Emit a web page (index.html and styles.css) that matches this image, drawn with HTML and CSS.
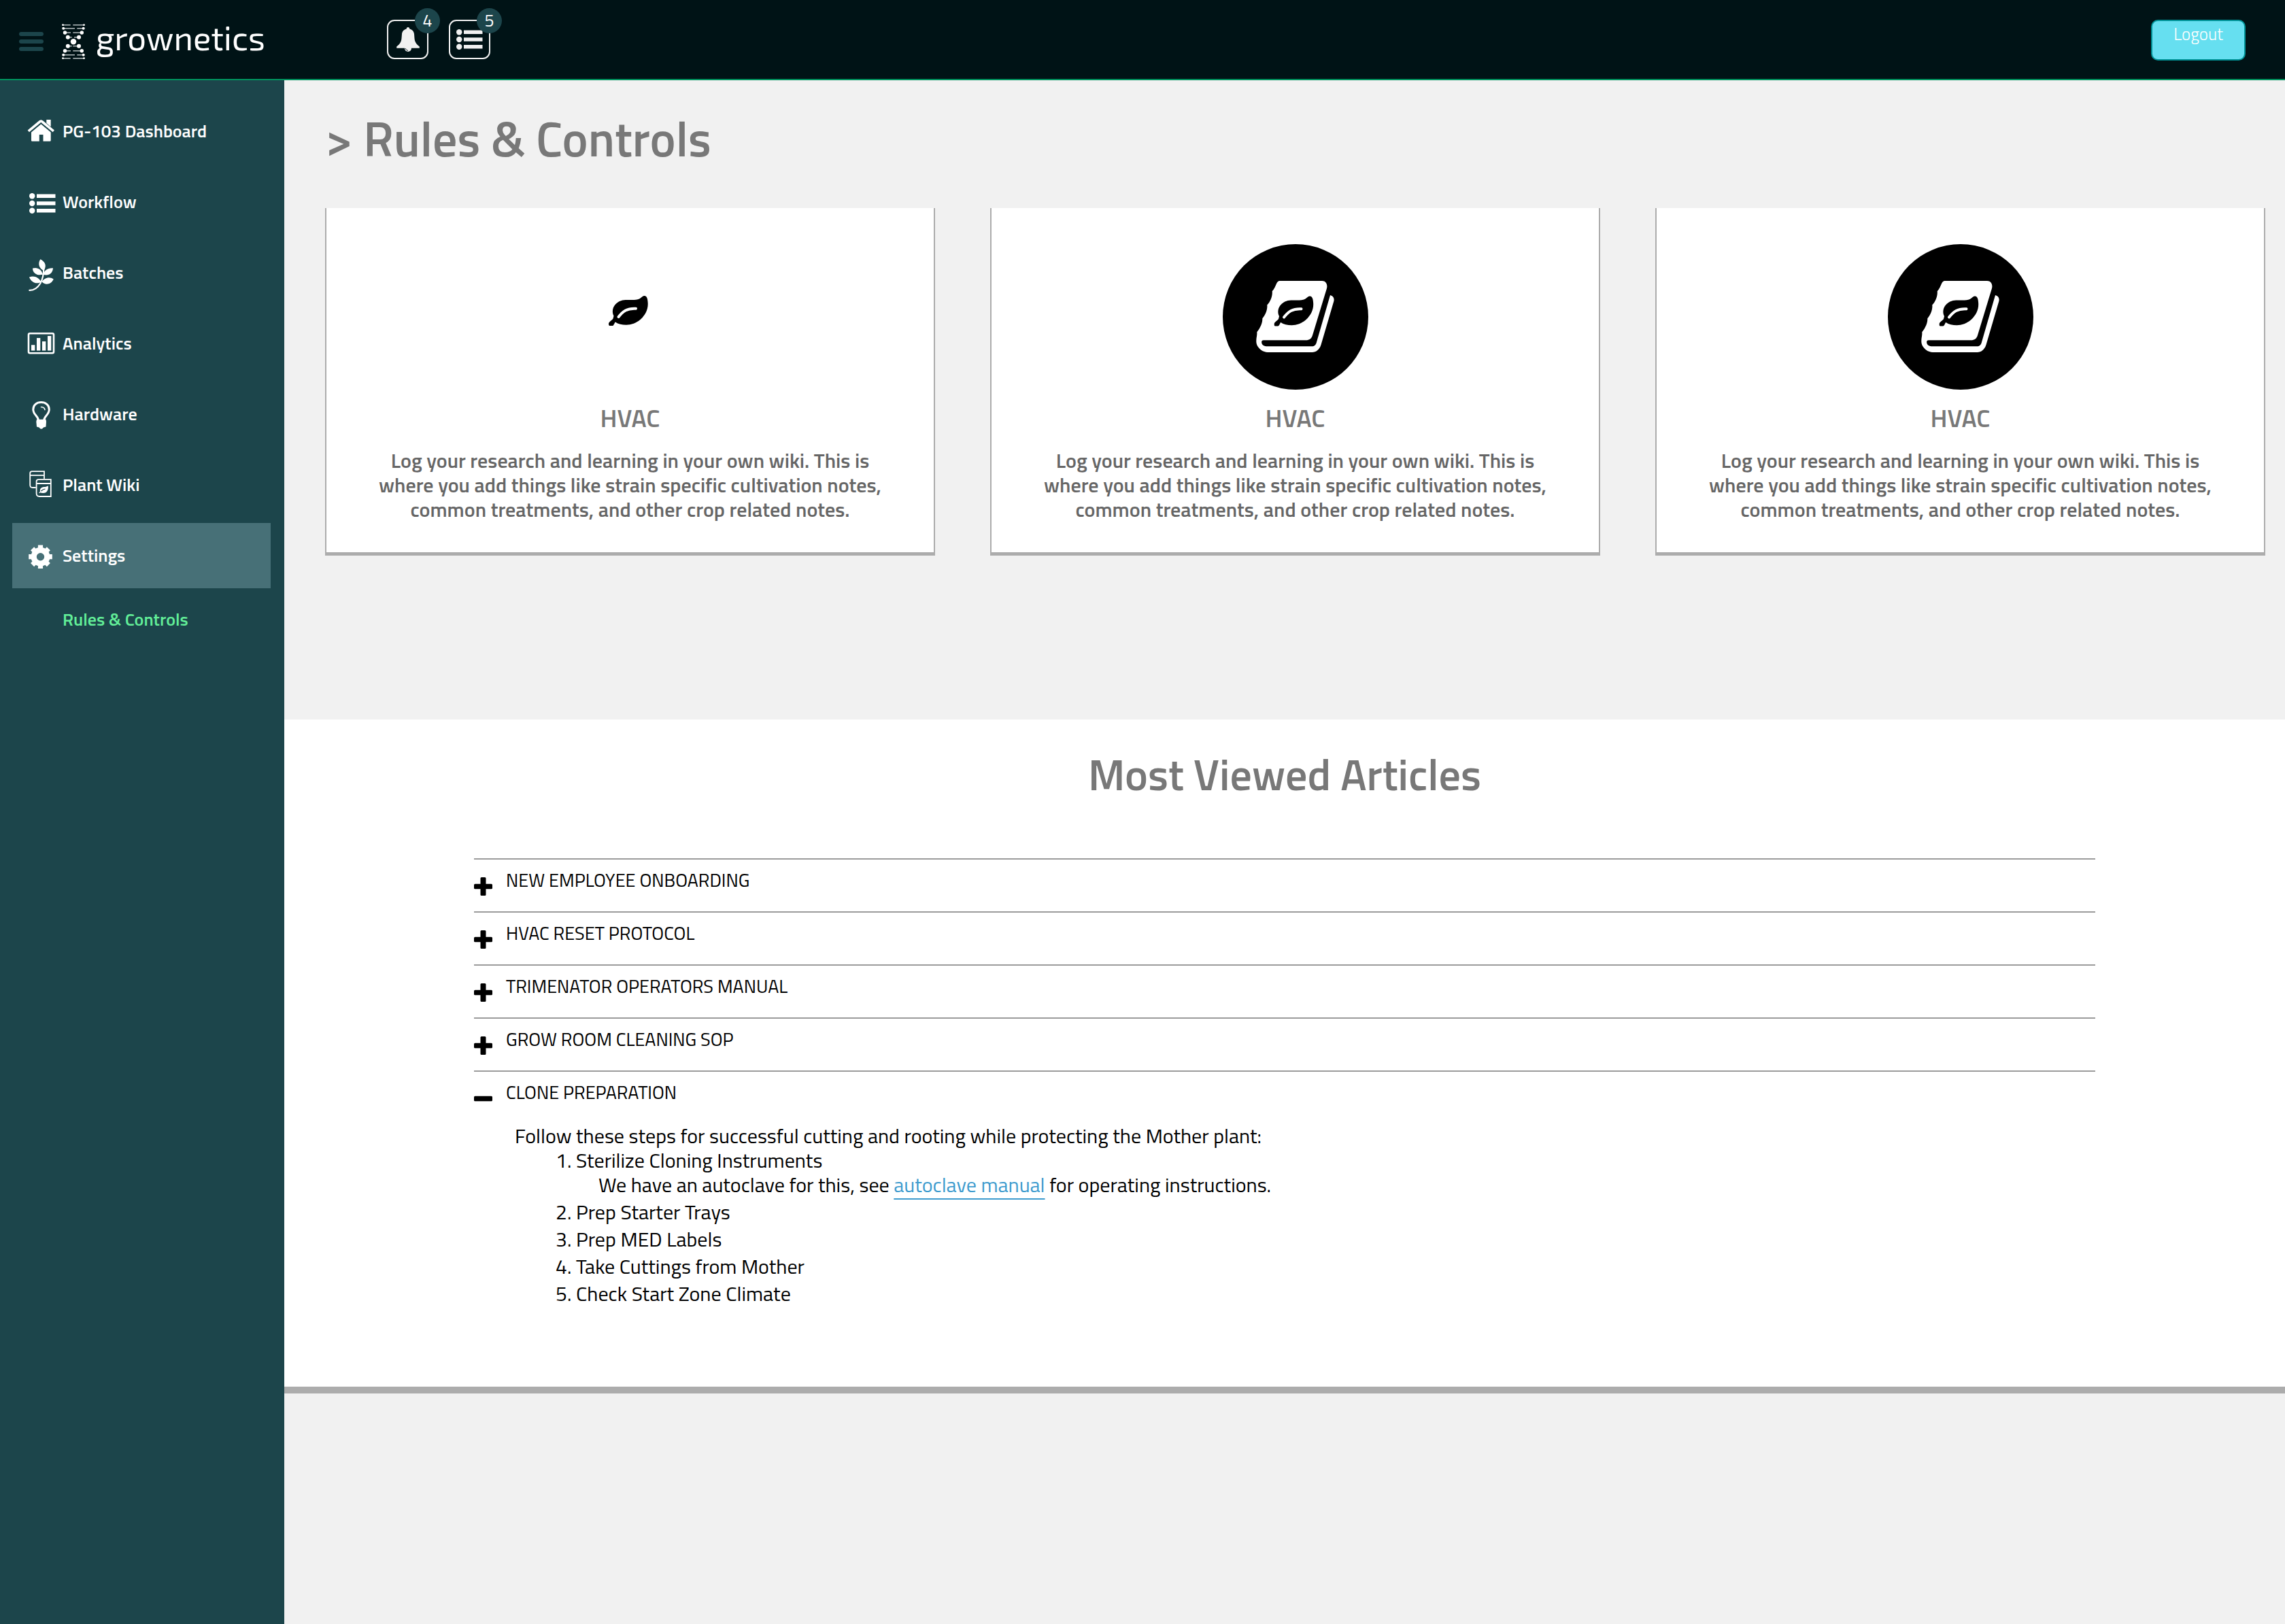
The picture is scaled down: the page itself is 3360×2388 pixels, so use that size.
FILE: index.html
```html
<!DOCTYPE html>
<html lang="en">
<head>
<meta charset="utf-8">
<meta name="viewport" content="width=device-width, initial-scale=1">
<title>Grownetics – Rules &amp; Controls</title>
<link rel="stylesheet" href="styles.css">
</head>
<body>
<svg class="sprite" aria-hidden="true">
  <symbol id="leaf" viewBox="0 0 60 50">
    <path fill="#000" d="M7.500 35.500C5 31 5 24 10 18.500C15 13 21 12 27 12C34 12 41 12.500 45 10.500C48 9 49 6.500 52 6C56 5.500 57.500 10 57.700 17C58 26 54 34 47 40.500C41 46 33 48.700 26 48.700C19.500 48.700 14 47.500 9.700 44.500C8.500 46 8 49 5.500 50.700C3 52.300-.5 50 0 46.800C.5 44 5.500 41.500 6.500 39.500Z"/>
    <path fill="none" stroke="#fff" stroke-width="4" stroke-linecap="round" d="M14.500 37C21 28.500 27 24 40 24.700"/>
  </symbol>
  <symbol id="list" viewBox="0 0 39 30">
    <circle cx="4.200" cy="4.200" r="4.200"/><circle cx="4.200" cy="15" r="4.200"/><circle cx="4.200" cy="25.800" r="4.200"/>
    <path d="M11 1.500h27.500V7H11zM11 12.300h27.500v5.500H11zM11 23h27.500v5.500H11z"/>
  </symbol>
  <symbol id="book" viewBox="0 0 214 214">
    <circle cx="107" cy="107" r="107"/>
    <path fill="#fff" d="M85 54H146C151.500 54 154.500 59 153 65L132 134C130.500 139 127.500 141.300 122 141.300H60C57.500 141.300 57 142.500 57.200 145C57.700 148.500 61 150.300 65.500 150.300H131C135 150.300 137 148 138 144L158 75C162 76 164.500 79.500 163.300 84L144.500 148C142.500 154.500 137.500 159 131.500 159H66C57 158.500 49 151 49.300 142.500C49.300 137 50.800 134 50.300 129.300C56 122 58.500 115 58.300 109.300C63 104 66 96 65.300 89.300C70 85 73.500 76 72.700 69.300C76 66 77.500 61 79.500 57C81 54.300 82.500 54 85 54Z"/>
    <use href="#leaf" x="75.500" y="70.500" width="60" height="50"/>
  </symbol>
  <symbol id="plus" viewBox="0 0 27 27"><rect x="9.500" width="8" height="27" rx="1.500"/><rect y="9.800" width="27" height="7.500" rx="1.500"/></symbol>
  <symbol id="minus" viewBox="0 0 27 27"><rect y="9.800" width="27" height="7.500" rx="1.500"/></symbol>
</svg>

<header class="topbar">
  <button class="menu-toggle" type="button" aria-label="Toggle menu"><span></span><span></span><span></span></button>
  <a class="brand" href="#">
    <svg class="brand-mark" viewBox="0 0 34 52" aria-hidden="true">
      <path stroke="#b4bcbd" stroke-width="1.600" fill="none" d="M1.300 1.700H12.700M16.300 1.700H32.700M2 6.700H19M22.300 6.700H31.700M4.300 13H13M16.300 13H29.300M8.700 19.700H14.700M18 19.700H25M8.700 32.700H14.700M16.300 32.700H25M4.300 39.700H13M16.300 39.700H29.300M2 45.700H19M22.300 45.700H31.700M1.300 50.700H12.700M16.300 50.700H32.700"/>
      <g fill="#fff">
        <circle cx="1.500" cy="1.700" r="1.400"/><circle cx="32.500" cy="1.700" r="1.400"/>
        <circle cx="2.200" cy="6.700" r="2"/><circle cx="31.700" cy="6.700" r="2"/>
        <circle cx="4.500" cy="13" r="2.700"/><circle cx="29.300" cy="13" r="2.700"/>
        <circle cx="8.800" cy="19.700" r="3"/><circle cx="25" cy="19.700" r="3"/>
        <circle cx="17" cy="26.300" r="4.200"/>
        <circle cx="8.800" cy="32.700" r="3"/><circle cx="25" cy="32.700" r="3"/>
        <circle cx="4.500" cy="39.700" r="2.700"/><circle cx="29.300" cy="39.700" r="2.700"/>
        <circle cx="2.200" cy="45.700" r="2"/><circle cx="31.700" cy="45.700" r="2"/>
        <circle cx="1.500" cy="50.700" r="1.400"/><circle cx="32.500" cy="50.700" r="1.400"/>
      </g>
    </svg>
    <span class="brand-name">grownetics</span>
  </a>
  <div class="alerts">
    <button class="alert" type="button" aria-label="Notifications">
      <svg class="bell" viewBox="0 0 34 36" aria-hidden="true">
        <path d="M17 0C18.500 0 19.300 1 19.300 2.500C23 3.300 25.500 6 26 10C26.500 15 26.300 18 27.500 21C29 25 31.500 26.500 33.800 28.500V30.700H.2V28.500C2.500 26.500 5 25 6.500 21C7.700 18 7.500 15 8 10C8.500 6 11 3.300 14.700 2.500C14.700 1 15.500 0 17 0Z"/>
        <circle cx="17" cy="31" r="5"/>
        <path class="bell-line" d="M13 31C14 33 15 34 17 34.300"/>
      </svg>
      <span class="count">4</span>
    </button>
    <button class="alert" type="button" aria-label="Tasks">
      <svg class="tasks" aria-hidden="true"><use href="#list"/></svg>
      <span class="count">5</span>
    </button>
  </div>
  <button class="logout" type="button">Logout</button>
</header>

<div class="layout">
  <nav class="sidebar" aria-label="Main">
    <a class="nav-item" href="#">
      <svg class="nav-icon" viewBox="0 0 40 48" aria-hidden="true"><path d="M20.300 13.500L34.700 25.500V37.500Q34.700 38.700 33.500 38.700H23.500V29H17.800V38.700H7.200Q6 38.700 6 37.500V25.500Z"/><path d="M28.300 12V7H34.700V17.500Z"/><path fill="none" stroke="#1c454b" stroke-width="1.200" d="M4 25.500L20.300 12L36.600 25.500"/><path fill="none" stroke="currentColor" stroke-width="3.600" stroke-linejoin="round" d="M1.800 23.800L18.500 10Q20.300 8 22.100 10L38.800 23.800"/></svg>
      PG-103 Dashboard</a>
    <a class="nav-item" href="#">
      <svg class="nav-icon" viewBox="0 0 40 48" aria-hidden="true"><use href="#list" x="3" y="11" width="39" height="30"/></svg>
      Workflow</a>
    <a class="nav-item" href="#">
      <svg class="nav-icon" viewBox="0 0 40 48" aria-hidden="true"><path d="M19.300 4.300C25 7 28.500 12 26 18L24.500 21C19 19 14.500 12 19.300 4.300ZM8 17.500C15 15.500 21 19 23 26.500C16 29 8 25.500 8 17.500ZM38 17.300C31 16.500 25 20 23.800 26.800C31 29.500 37.500 25 38 17.300ZM3 30.500C10 27.500 17.500 31 20.500 37.500C14.500 41.500 6 39 3 30.500ZM38.700 33.500C33 29 25 31.500 21.500 37.300C26 42.500 35 42 38.700 33.500Z"/><path fill="none" stroke="currentColor" stroke-width="2.200" stroke-linecap="round" d="M24.300 17C24.300 26 22.500 34 19.300 39.700C15.500 46 10 50 3.300 49.800"/></svg>
      Batches</a>
    <a class="nav-item" href="#">
      <svg class="nav-icon" viewBox="0 0 40 48" aria-hidden="true"><rect x="2" y="9.200" width="37" height="29" rx="2" fill="none" stroke="currentColor" stroke-width="2.600"/><path d="M6 26.300h5.300v8.200H6zM14 16h5.300v18.500H14zM22 21h5.300v13.500H22zM30 13h5.300v21.500H30z"/></svg>
      Analytics</a>
    <a class="nav-item" href="#">
      <svg class="nav-icon" viewBox="0 0 40 48" aria-hidden="true"><path fill="none" stroke="currentColor" stroke-width="3" d="M16.500 33C16 26.500 8.800 25 8.800 17C8.800 10.500 14 6.600 20.500 6.600C27 6.600 32.300 10.500 32.300 17C32.300 25 25 26.500 24.700 33"/><path d="M14 31.700H27.500L28 35L27.500 42.500L24 43.500Q20.700 48 17.500 43.500L14 42.500L13.300 35Z"/><path fill="none" stroke="currentColor" stroke-width="1.600" stroke-linecap="round" d="M20.500 13.500C23.500 13.500 25.500 15 26 17.500"/></svg>
      Hardware</a>
    <a class="nav-item" href="#">
      <svg class="nav-icon" viewBox="0 0 40 48" aria-hidden="true"><path fill="none" stroke="currentColor" stroke-width="1.800" d="M12.500 28H8Q4.200 28 4.200 24V7Q4.200 4.200 7 4.200H25V15M4.500 9.800H25M16.500 16.200H34.800V41H18Q13.600 41 13.600 36.500V19Q13.600 16.200 16.500 16.200ZM14 22H34.800"/><path d="M17.300 35.500L19 33.500C18 28.500 22 27 26 27C28.500 27 29.500 25.500 30.800 25.500C31.500 31 29 36 24 36C22 36.200 20.500 36 19.500 35.300L18 36.300Z"/><path fill="none" stroke="#1c454b" stroke-width="1.200" d="M20.500 33Q23 30.500 26.500 30"/></svg>
      Plant Wiki</a>
    <a class="nav-item active" href="#">
      <svg class="nav-icon" viewBox="0 0 40 48" aria-hidden="true"><g fill="none" stroke="currentColor"><circle cx="19.500" cy="25.700" r="9.800" stroke-width="8.200"/><path stroke-width="7.200" d="M19.500 15V8.400M19.500 36.400V43M8.800 25.700H2.200M30.200 25.700H36.800M11.500 17.700L7.600 13.800M27.500 33.700L31.400 37.600M11.500 33.700L7.600 37.600M27.500 17.700L31.400 13.800"/></g></svg>
      Settings</a>
    <a class="sub-item" href="#" aria-current="page">Rules &amp; Controls</a>
  </nav>

  <main class="content">
    <h1 class="page-title">&gt; Rules &amp; Controls</h1>
    <div class="cards">
      <article class="card">
        <div class="card-art"><svg class="card-leaf" aria-hidden="true"><use href="#leaf"/></svg></div>
        <h2 class="card-title">HVAC</h2>
        <p class="card-text">Log your research and learning in your own wiki. This is where you add things like strain specific cultivation notes, common treatments, and other crop related notes.</p>
      </article>
      <article class="card">
        <div class="card-art"><svg class="card-book" aria-hidden="true"><use href="#book"/></svg></div>
        <h2 class="card-title">HVAC</h2>
        <p class="card-text">Log your research and learning in your own wiki. This is where you add things like strain specific cultivation notes, common treatments, and other crop related notes.</p>
      </article>
      <article class="card">
        <div class="card-art"><svg class="card-book" aria-hidden="true"><use href="#book"/></svg></div>
        <h2 class="card-title">HVAC</h2>
        <p class="card-text">Log your research and learning in your own wiki. This is where you add things like strain specific cultivation notes, common treatments, and other crop related notes.</p>
      </article>
    </div>

    <section class="articles">
      <h2 class="articles-title">Most Viewed Articles</h2>
      <div class="accordion">
        <div class="entry"><button class="entry-toggle" type="button" aria-expanded="false"><svg class="entry-icon" aria-hidden="true"><use href="#plus"/></svg>NEW EMPLOYEE ONBOARDING</button></div>
        <div class="entry"><button class="entry-toggle" type="button" aria-expanded="false"><svg class="entry-icon" aria-hidden="true"><use href="#plus"/></svg>HVAC RESET PROTOCOL</button></div>
        <div class="entry"><button class="entry-toggle" type="button" aria-expanded="false"><svg class="entry-icon" aria-hidden="true"><use href="#plus"/></svg>TRIMENATOR OPERATORS MANUAL</button></div>
        <div class="entry"><button class="entry-toggle" type="button" aria-expanded="false"><svg class="entry-icon" aria-hidden="true"><use href="#plus"/></svg>GROW ROOM CLEANING SOP</button></div>
        <div class="entry">
          <button class="entry-toggle" type="button" aria-expanded="true"><svg class="entry-icon" aria-hidden="true"><use href="#minus"/></svg>CLONE PREPARATION</button>
          <div class="entry-body">
            <p>Follow these steps for successful cutting and rooting while protecting the Mother plant:</p>
            <ol class="steps">
              <li>Sterilize Cloning Instruments
                <p class="step-note">We have an autoclave for this, see <a class="doc-link" href="#">autoclave manual</a> for operating instructions.</p>
              </li>
              <li>Prep Starter Trays</li>
              <li>Prep MED Labels</li>
              <li>Take Cuttings from Mother</li>
              <li>Check Start Zone Climate</li>
            </ol>
          </div>
        </div>
      </div>
    </section>
  </main>
</div>
</body>
</html>
```
FILE: styles.css
```css
* { box-sizing: border-box; }

body {
  margin: 0;
  min-height: 100vh;
  display: flex;
  flex-direction: column;
  background: #f1f1f1;
  color: #000;
  font-family: "Titillium Web", Roboto, "Liberation Sans", sans-serif;
  font-size: 27px;
  line-height: 36px;
}

h1, h2, p, ol { margin: 0; }
a { color: inherit; text-decoration: none; }
button { font: inherit; color: inherit; background: none; border: 0; padding: 0; cursor: pointer; }
svg { display: block; overflow: visible; fill: currentColor; flex: none; }
.sprite { position: absolute; width: 0; height: 0; }

/* Top bar */
.topbar {
  display: flex;
  align-items: flex-start;
  height: 118px;
  padding: 29px 58px 0 28px;
  background: #001316;
  border-bottom: 2px solid #00925f;
  color: #fff;
}
.menu-toggle { display: grid; gap: 5px; width: 36px; margin: 18px 27px 0 0; }
.menu-toggle span { height: 6px; border-radius: 3px; background: #1c454b; }
.brand { display: flex; gap: 16px; width: 478px; padding-top: 6px; }
.brand-mark { width: 34px; height: 52px; }
.brand-name { font-family: "Exo 2", "Open Sans", sans-serif; font-size: 49px; line-height: 40px; }
.alerts { display: flex; gap: 30px; color: #f1f1f1; }
.alert {
  position: relative;
  display: grid;
  place-items: center;
  width: 61px;
  height: 58px;
  border: 2px solid #f1f1f1;
  border-radius: 11px;
}
.bell { width: 34px; height: 36px; }
.bell-line { fill: none; stroke: #001316; stroke-width: 1; }
.tasks { width: 39px; height: 30px; }
.count {
  position: absolute;
  left: 39px;
  top: -19px;
  width: 37px;
  height: 37px;
  border-radius: 50%;
  background: #1c454b;
  color: #fff;
  font-size: 25px;
  line-height: 37px;
}
.logout {
  width: 139px;
  height: 60px;
  margin-left: auto;
  padding-bottom: 18px;
  border: 2px solid #009397;
  border-radius: 10px;
  background: #66dff0;
  font-size: 25px;
  font-weight: 300;
}

/* Sidebar */
.layout { display: flex; flex: 1; }
.sidebar {
  display: flex;
  flex-direction: column;
  gap: 8px;
  width: 418px;
  flex: none;
  padding: 27px 20px 0 18px;
  background: #1c454b;
  color: #fff;
  font-size: 26px;
  font-weight: 600;
}
.nav-item { display: flex; align-items: center; gap: 12px; height: 96px; padding-left: 22px; }
.nav-item.active { background: #477077; }
.nav-icon { width: 40px; height: 48px; }
.sub-item { padding: 20px 0 20px 74px; color: #62ee98; }

/* Main column */
.content { flex: 1; min-width: 0; padding-top: 45px; }
.page-title {
  margin: 0 29px 63px 60px;
  color: #787878;
  font-size: 72px;
  font-weight: 600;
  line-height: 80px;
}
.cards {
  display: grid;
  grid-template-columns: repeat(3, 1fr);
  gap: 81px;
  margin: 0 29px 241px 60px;
}
.card {
  padding: 53px 60px 45px;
  border: 2px solid #acacac;
  border-width: 0 2px 5px;
  background: #fff;
  text-align: center;
}
.card-art { display: flex; justify-content: center; height: 214px; }
.card-book { width: 214px; height: 214px; }
.card-leaf { width: 60px; height: 50px; margin: 70px 4px 0 0; }
.card-title { margin: 19px 0 23px; color: #787878; font-size: 37px; font-weight: 600; line-height: 44px; }
.card-text { color: #666; font-size: 30px; font-weight: 600; }

/* Articles */
.articles { padding: 40px 279px 119px; border-bottom: 10px solid #acacac; background: #fff; }
.articles-title {
  margin-bottom: 84px;
  color: #787878;
  font-size: 64px;
  font-weight: 600;
  line-height: 80px;
  text-align: center;
}
.entry { border-top: 2px solid #9b9b9b; }
.entry-toggle {
  display: flex;
  gap: 20px;
  width: 100%;
  padding: 12px 0 23px;
  text-align: left;
}
.entry-icon { width: 27px; height: 27px; margin-top: 14px; }
.entry-body { padding-left: 60px; font-size: 30px; }
.steps { padding-left: 90px; }
.steps li + li { margin-top: 4px; }
.step-note { padding-left: 33px; }
.doc-link {
  color: #3d9bce;
  text-decoration: underline 2px;
  text-decoration-skip-ink: none;
  text-underline-offset: 9px;
}
```
